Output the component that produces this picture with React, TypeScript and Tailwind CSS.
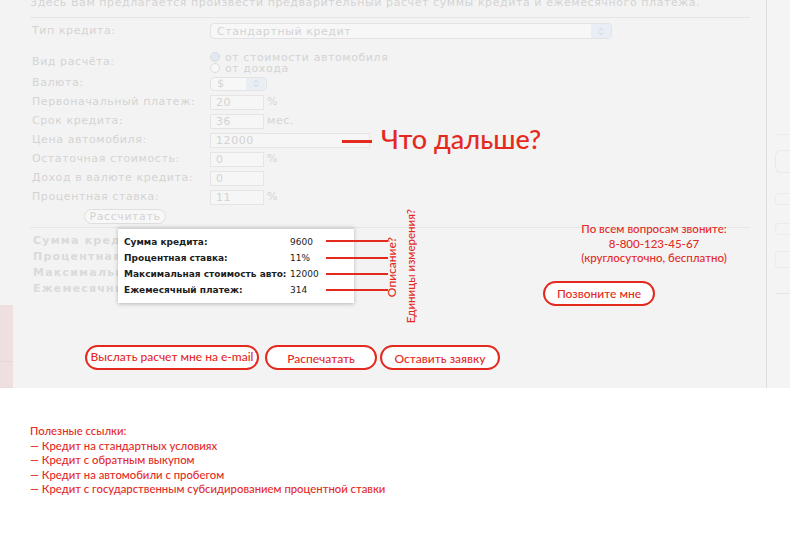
import React from "react";

const RED = "text-[#e42a1f]";

const fieldRows = [
  { label: "Валюта:", kind: "currency" },
  { label: "Первоначальный платеж:", value: "20", unit: "%", w: "w-[54px]" },
  { label: "Срок кредита:", value: "36", unit: "мес.", w: "w-[54px]" },
  { label: "Цена автомобиля:", value: "12000", w: "w-[160px]" },
  { label: "Остаточная стоимость:", value: "0", unit: "%", w: "w-[54px]" },
  { label: "Доход в валюте кредита:", value: "0", w: "w-[54px]" },
  { label: "Процентная ставка:", value: "11", unit: "%", w: "w-[54px]" },
];

const results = [
  { label: "Сумма кредита:", value: "9600" },
  { label: "Процентная ставка:", value: "11%" },
  { label: "Максимальная стоимость авто:", value: "12000" },
  { label: "Ежемесячный платеж:", value: "314" },
];

const links = [
  "Кредит на стандартных условиях",
  "Кредит с обратным выкупом",
  "Кредит на автомобили с пробегом",
  "Кредит с государственным субсидированием процентной ставки",
];

function SelectArrows() {
  return (
    <svg width="6" height="9" viewBox="0 0 6 9" className="text-[#c9d2de]">
      <path d="M1 3.5 L3 1.5 L5 3.5" fill="none" stroke="currentColor" strokeWidth="1" />
      <path d="M1 5.5 L3 7.5 L5 5.5" fill="none" stroke="currentColor" strokeWidth="1" />
    </svg>
  );
}

function Radio({ checked }: { checked?: boolean }) {
  return (
    <span
      className={
        "inline-block w-[10px] h-[10px] rounded-full border border-[#dcdcdc] mr-[5px] " +
        (checked ? "bg-[#e2e9f3]" : "bg-[#f7f7f7]")
      }
    />
  );
}

function PillButton({ children, className }: { children: React.ReactNode; className: string }) {
  return (
    <div
      className={
        "h-[25px] rounded-full border-2 border-[#e42a1f] bg-white flex items-center justify-center text-[12px] font-medium " +
        RED +
        " " +
        className
      }
    >
      {children}
    </div>
  );
}

export default function App() {
  return (
    <div className="w-[790px] h-[542px] overflow-hidden bg-white font-['DejaVu_Sans',sans-serif]">
      <div className="flex h-[388px] bg-[#f3f3f3]">
        {/* main calculator column */}
        <div className="relative w-[766px] pl-[30px] pr-[16px] text-[11px] tracking-[0.58px] text-[#d3d3d3]">
          <div className="-mt-[4px] pb-[7px] leading-[14px] border-b border-[#e6e6e6] whitespace-nowrap">
            Здесь Вам предлагается произвести предварительный расчет суммы кредита и ежемесячного платежа.
          </div>

          <div className="mt-[4px] h-[18px] flex items-center">
            <div className="w-[180px] pl-[2px]">Тип кредита:</div>
            <div className="w-[402px] h-[16px] rounded-[4px] border border-[#e3e3e3] bg-[#f7f7f7] flex items-center">
              <span className="flex-1 pl-[6px] leading-none">Стандартный кредит</span>
              <span className="w-[20px] h-full rounded-r-[4px] bg-[#e9eef4] flex items-center justify-center">
                <SelectArrows />
              </span>
            </div>
          </div>

          <div className="mt-[11px] h-[23px] flex items-center">
            <div className="w-[180px] pl-[2px]">Вид расчёта:</div>
            <div className="leading-[11px]">
              <div className="flex items-center">
                <Radio checked />
                от стоимости автомобиля
              </div>
              <div className="flex items-center">
                <Radio />
                от дохода
              </div>
            </div>
          </div>

          {fieldRows.map((row) => (
            <div key={row.label} className="h-[19px] flex items-center">
              <div className="w-[180px] pl-[2px] whitespace-nowrap">{row.label}</div>
              {row.kind === "currency" ? (
                <div className="w-[57px] h-[14px] rounded-[4px] border border-[#e3e3e3] bg-[#f7f7f7] flex items-center">
                  <span className="flex-1 pl-[6px] leading-none">$</span>
                  <span className="w-[20px] h-full rounded-r-[4px] bg-[#e9eef4] flex items-center justify-center">
                    <SelectArrows />
                  </span>
                </div>
              ) : (
                <>
                  <div
                    className={
                      "h-[15px] border border-[#e5e5e5] bg-[#f6f6f6] pl-[5px] leading-[13px] " + row.w
                    }
                  >
                    {row.value}
                  </div>
                  {row.unit && <span className="ml-[3px]">{row.unit}</span>}
                </>
              )}
            </div>
          ))}

          <div className="h-[21px] pt-[2px] border-b border-[#e6e6e6]">
            <div className="ml-[54px] w-[82px] h-[15px] rounded-full border border-[#dedede] bg-[#f7f7f7] flex items-center justify-center leading-none">
              Рассчитать
            </div>
          </div>

          {/* results + contacts */}
          <div className="h-[117px] flex">
            <div className="flex-1 pt-[5px] pl-[3px] text-[11px] font-bold tracking-[1.2px] text-[#dadada]">
              {results.map((r) => (
                <div key={r.label} className="h-[16px] leading-[16px] whitespace-nowrap">
                  {r.label}
                </div>
              ))}
            </div>
            <div className="w-[220px] font-['Lato',sans-serif] tracking-normal">
              <div className={"-mt-[6px] ml-[28px] w-[192px] text-center text-[11.5px] font-medium leading-[14.5px] " + RED}>
                <div>По всем вопросам звоните:</div>
                <div>8-800-123-45-67</div>
                <div>(круглосуточно, бесплатно)</div>
              </div>
              <PillButton className="mt-[15px] ml-[13px] w-[112px] pt-[2px]">Позвоните мне</PillButton>
            </div>
          </div>

          <div className="flex font-['Lato',sans-serif] tracking-normal">
            <PillButton className="ml-[55px] w-[174px] pb-[2px]">Выслать расчет мне на e-mail</PillButton>
            <PillButton className="ml-[6px] w-[112px] pt-[3px]">Распечатать</PillButton>
            <PillButton className="ml-[3px] w-[120px] pt-[3px]">Оставить заявку</PillButton>
          </div>

          {/* cut-off block on the far left */}
          <div className="absolute left-0 top-[305px] w-[13px] h-[83px] bg-[#efdfdf] border-b border-[#eadada]">
            <div className="mt-[56px] border-t border-[#e8d6d6]" />
          </div>

          {/* "what next" note */}
          <div className={"absolute left-[342px] top-[122px] flex items-center font-['Lato',sans-serif] font-medium tracking-normal " + RED}>
            <div className="w-[30px] h-[3px] bg-[#e42a1f] mt-[4px]" />
            <div className="ml-[9px] text-[27px] leading-[34px]">Что дальше?</div>
          </div>

          {/* result popup */}
          <div className="absolute left-[118px] top-[227px] w-[236px] h-[76px] bg-white border-t-2 border-[#d6d6d6] shadow-[0_1px_4px_rgba(0,0,0,0.25)] pt-[6px] pl-[6px] tracking-normal text-[#1c1c1c] text-[9px]">
            {results.map((r) => (
              <div key={r.label} className="h-[16px] flex items-center">
                <span className="w-[166px] font-bold whitespace-nowrap">{r.label}</span>
                <span>{r.value}</span>
              </div>
            ))}
          </div>

          {/* annotation lines */}
          <div className="absolute left-[326px] top-[240px] w-[62px] flex flex-col">
            <div className="h-[2px] bg-[#e42a1f]" />
            <div className="h-[2px] bg-[#e42a1f] mt-[15px]" />
            <div className="h-[2px] bg-[#e42a1f] mt-[14px]" />
            <div className="h-[2px] bg-[#e42a1f] mt-[14px]" />
          </div>
          <div
            className={
              "absolute left-[385px] top-[237px] [writing-mode:vertical-rl] rotate-180 font-['Lato',sans-serif] font-medium tracking-normal text-[12px] leading-[14px] " +
              RED
            }
          >
            Описание?
          </div>
          <div
            className={
              "absolute left-[404px] top-[209px] [writing-mode:vertical-rl] rotate-180 font-['Lato',sans-serif] font-medium tracking-normal text-[11.5px] leading-[14px] " +
              RED
            }
          >
            Единицы измерения?
          </div>
        </div>

        {/* right side column */}
        <div className="flex-1 border-l border-[#dedede] bg-[#f4f4f4] pl-[8px]">
          <div className="mt-[134px] border-t border-[#ebebeb]" />
          <div className="mt-[15px] h-[23px] rounded-l-[6px] border border-r-0 border-[#e9e9e9]" />
          <div className="mt-[20px] h-[12px] rounded-l-[4px] border border-r-0 border-[#ebebeb]" />
          <div className="mt-[18px] h-[12px] rounded-l-[4px] border border-r-0 border-[#ebebeb]" />
          <div className="mt-[16px] h-[17px] rounded-l-[4px] border border-r-0 border-[#ebebeb]" />
          <div className="mt-[25px] border-t border-[#e6e6e6]" />
        </div>
      </div>

      <div className={"pl-[30px] pt-[36px] font-['Lato',sans-serif] font-medium text-[11.3px] leading-[14.5px] " + RED}>
        <div>Полезные ссылки:</div>
        {links.map((l) => (
          <div key={l}>— {l}</div>
        ))}
      </div>
    </div>
  );
}
